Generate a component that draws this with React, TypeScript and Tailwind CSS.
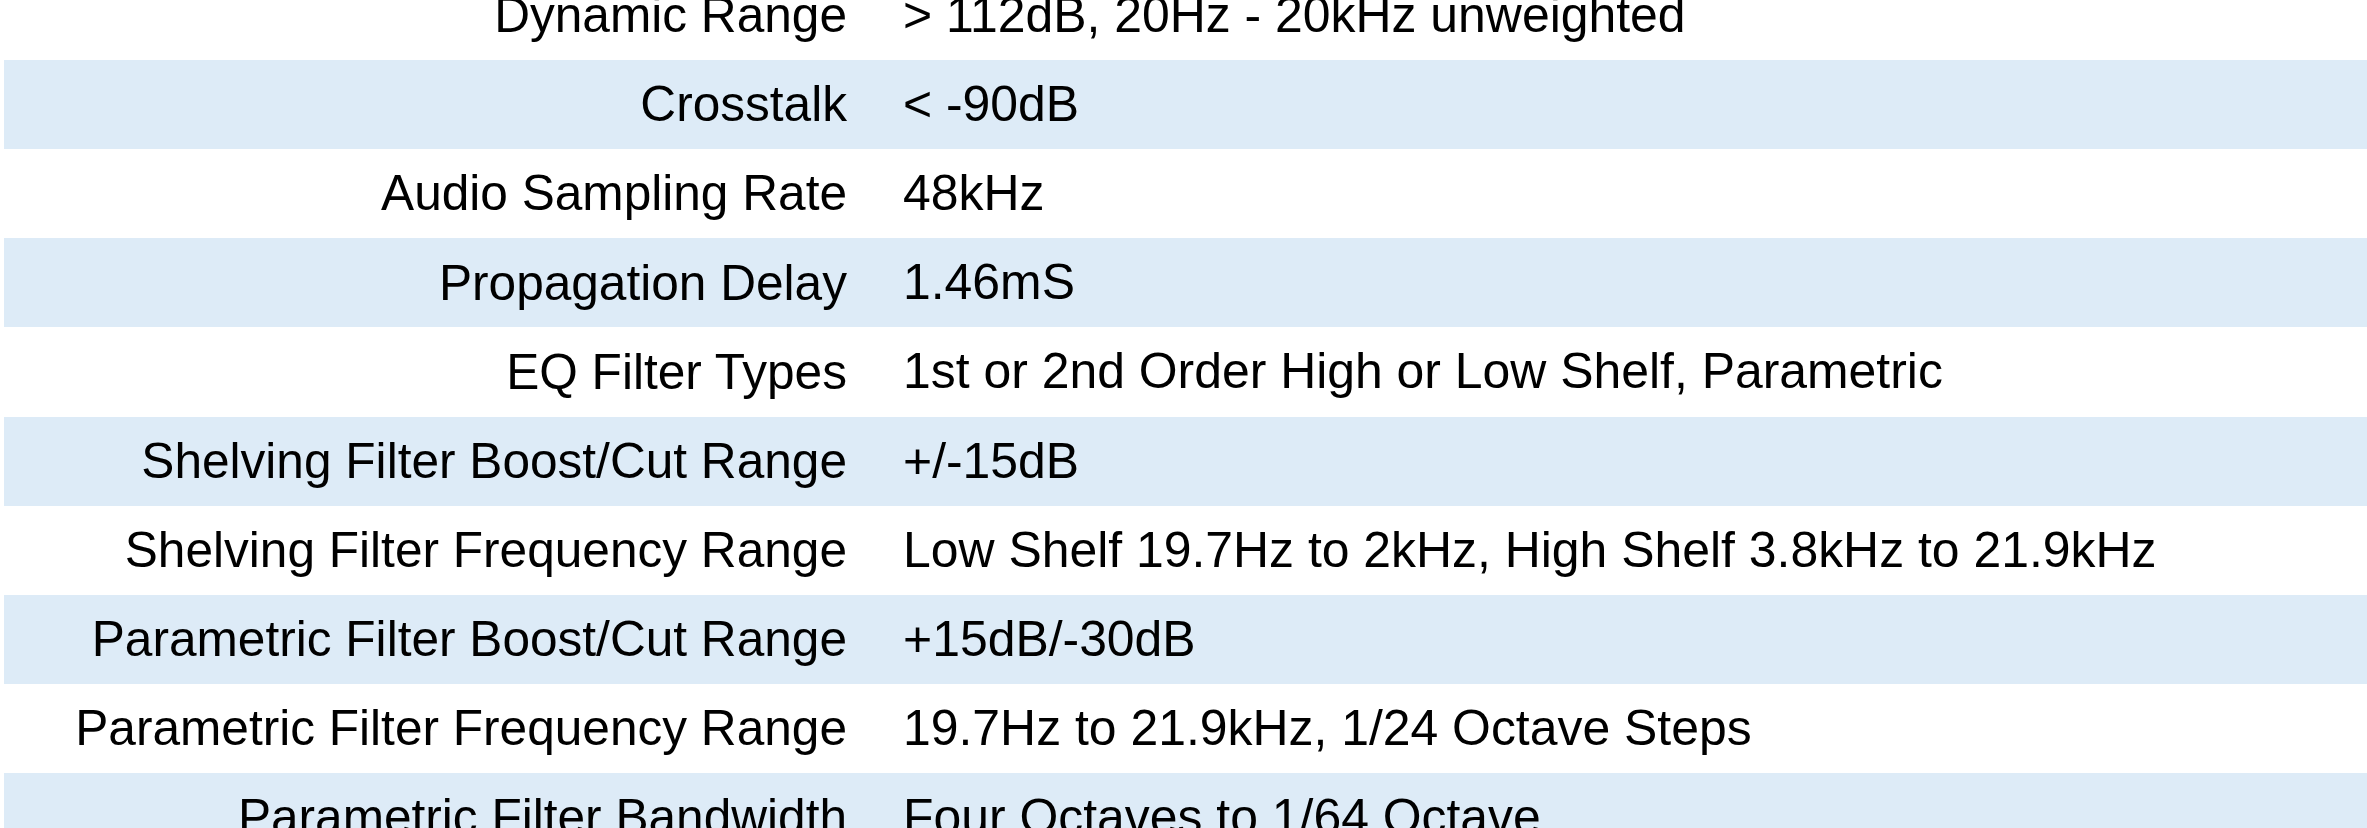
const specs = [
  ["Dynamic Range", "> 112dB, 20Hz - 20kHz unweighted"],
  ["Crosstalk", "< -90dB"],
  ["Audio Sampling Rate", "48kHz"],
  ["Propagation Delay", "1.46mS"],
  ["EQ Filter Types", "1st or 2nd Order High or Low Shelf, Parametric"],
  ["Shelving Filter Boost/Cut Range", "+/-15dB"],
  ["Shelving Filter Frequency Range", "Low Shelf 19.7Hz to 2kHz, High Shelf 3.8kHz to 21.9kHz"],
  ["Parametric Filter Boost/Cut Range", "+15dB/-30dB"],
  ["Parametric Filter Frequency Range", "19.7Hz to 21.9kHz, 1/24 Octave Steps"],
  ["Parametric Filter Bandwidth", "Four Octaves to 1/64 Octave"],
];

export default function App() {
  return (
    <div className="w-[2367px] h-[828px] overflow-hidden bg-white">
      <div className="-mt-[29.125px] pl-[4px] font-['Liberation_Sans',Arial,sans-serif] text-black">
        {specs.map(([label, value], i) => (
          <div
            key={label}
            className={`grid grid-cols-[843px_1fr] items-center h-[89.125px] ${
              i % 2 === 1 ? "bg-[#ddebf7]" : "bg-white"
            }`}
          >
            <div className="text-right text-[49.6px] whitespace-nowrap leading-none pt-[1px]">{label}</div>
            <div className="pl-[56px] text-[49.9px] whitespace-nowrap leading-none pt-[1px]">{value}</div>
          </div>
        ))}
      </div>
    </div>
  );
}
